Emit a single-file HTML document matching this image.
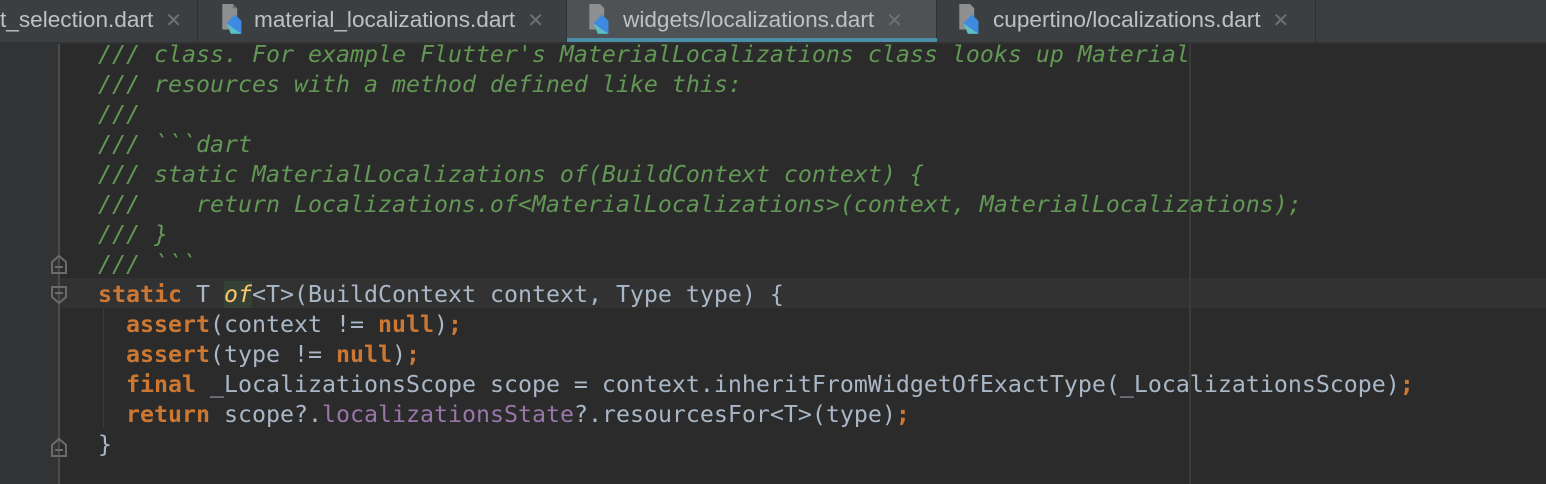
<!DOCTYPE html>
<html><head><style>
body{margin:0;width:1546px;height:484px;background:#2b2b2b;overflow:hidden;position:relative;font-family:"Liberation Sans",sans-serif}
#tabs{position:absolute;left:0;top:0;width:1546px;height:42px;background:#3c3f41;border-bottom:2px solid #323232}
.tab{position:absolute;top:0;height:42px;color:#c0c0c0;font-size:22.6px;line-height:40px;border-right:1px solid #2d2f30;box-sizing:border-box;white-space:nowrap}
.tab .x{color:#6e7072;font-size:20px;margin-left:12px}
.tab svg{position:absolute;top:4px}
#gutter{position:absolute;left:0;top:44px;width:58px;height:440px;background:#313335;border-right:2px solid #4a4c4e}
.line{position:absolute;left:98px;font-family:"DejaVu Sans Mono","Liberation Mono",monospace;font-size:23.25px;color:#a9b7c6;white-space:pre;height:30px;line-height:30px}
.c{color:#629755;font-style:italic}
.k{color:#cc7832;font-weight:bold}
.p{color:#9876aa}
.f{color:#ffc66d;font-style:italic;background:#344134}
</style></head><body>
<div id="tabs">
<div class="tab" style="left:0;width:198px;padding-left:0">t_selection.dart<span class="x">✕</span></div>
<div class="tab" style="left:198px;width:369px;padding-left:56px"><svg style="left:22px" width="28" height="34" viewBox="0 0 26 32"><path d="M2 0h10l4 4v10L8 24H2z" fill="#8d8f91"/><path d="M12 0v4h4z" fill="#6b6d6f"/><path d="M6 18l8-8 6 6v12H10z" fill="#3d8ae0"/><path d="M10 28l-4-10 8 6 6 4z" fill="#5dc0c0"/></svg>material_localizations.dart<span class="x">✕</span></div>
<div class="tab" style="left:567px;width:370px;padding-left:56px;background:#4e5254"><svg style="left:20px" width="28" height="34" viewBox="0 0 26 32"><path d="M2 0h10l4 4v10L8 24H2z" fill="#8d8f91"/><path d="M6 18l8-8 6 6v12H10z" fill="#3d8ae0"/><path d="M10 28l-4-10 8 6 6 4z" fill="#5dc0c0"/></svg>widgets/localizations.dart<span class="x">✕</span><div style="position:absolute;left:0;bottom:0;width:370px;height:4px;background:#4a8ea8"></div></div>
<div class="tab" style="left:937px;width:379px;padding-left:56px"><svg style="left:20px" width="28" height="34" viewBox="0 0 26 32"><path d="M2 0h10l4 4v10L8 24H2z" fill="#8d8f91"/><path d="M6 18l8-8 6 6v12H10z" fill="#3d8ae0"/><path d="M10 28l-4-10 8 6 6 4z" fill="#5dc0c0"/></svg>cupertino/localizations.dart<span class="x">✕</span></div>
</div>
<div id="gutter"></div>
<div style="position:absolute;left:60px;top:278px;width:1486px;height:30px;background:#323232"></div>
<div style="position:absolute;left:1189px;top:44px;width:2px;height:440px;background:#3b3b3b"></div>
<div style="position:absolute;left:103px;top:308px;width:1px;height:120px;background:#3b3b3b"></div>
<svg style="position:absolute;left:48px;top:252px" width="22" height="205"><g fill="none" stroke="#6b6b6b" stroke-width="2"><path d="M4 10l7-6 7 6v11H4z M7 15h8"/><path d="M4 35h14v10l-7 6-7-6z M7 41h8"/><path d="M4 193l7-6 7 6v11H4z M7 198h8"/></g></svg>
<div class="line c" style="top:40px">/// class. For example Flutter's MaterialLocalizations class looks up Material</div>
<div class="line c" style="top:70px">/// resources with a method defined like this:</div>
<div class="line c" style="top:100px">///</div>
<div class="line c" style="top:130px">/// &#96;&#96;&#96;dart</div>
<div class="line c" style="top:160px">/// static MaterialLocalizations of(BuildContext context) {</div>
<div class="line c" style="top:190px">///    return Localizations.of&lt;MaterialLocalizations&gt;(context, MaterialLocalizations);</div>
<div class="line c" style="top:220px">/// }</div>
<div class="line c" style="top:250px">/// &#96;&#96;&#96;</div>
<div class="line" style="top:280px"><span class="k">static</span> T <span class="f">of</span>&lt;T&gt;(BuildContext context, Type type) {</div>
<div class="line" style="top:310px">  <span class="k">assert</span>(context != <span class="k">null</span>)<span class="k">;</span></div>
<div class="line" style="top:340px">  <span class="k">assert</span>(type != <span class="k">null</span>)<span class="k">;</span></div>
<div class="line" style="top:370px">  <span class="k">final</span> _LocalizationsScope scope = context.inheritFromWidgetOfExactType(_LocalizationsScope)<span class="k">;</span></div>
<div class="line" style="top:400px">  <span class="k">return</span> scope?.<span class="p">localizationsState</span>?.resourcesFor&lt;T&gt;(type)<span class="k">;</span></div>
<div class="line" style="top:430px">}</div>
</body></html>
